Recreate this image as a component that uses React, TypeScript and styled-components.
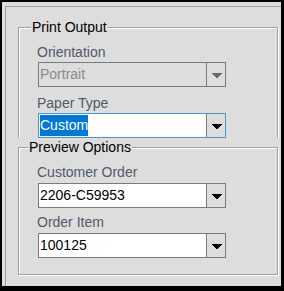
import React from "react";
import styled, { createGlobalStyle } from "styled-components";

const GlobalStyle = createGlobalStyle`
  html, body { margin: 0; padding: 0; background: #000; }
  body { font-family: "Liberation Sans", Arial, sans-serif; }
  * { box-sizing: border-box; }
`;

const BG = "#dddddd";

const Window = styled.div`
  width: 284px;
  height: 291px;
  border-style: solid;
  border-color: #000;
  border-width: 2px 3px 5px 2px;
  background: ${BG};
  display: flex;
  flex-direction: column;
  padding: 4px 0 0 3px;
`;

const Panel = styled.div`
  flex: 1;
  border-top: 1px solid #a0a0a0;
  border-left: 1px solid #a0a0a0;
  padding: 12px 3px 0 12px;
  display: flex;
  flex-direction: column;
`;

const Group = styled.fieldset<{ $open?: boolean; $top?: number }>`
  margin: ${(p) => p.$top ?? 0}px 0 0 0;
  min-width: 0;
  padding: 0;
  border: 1px solid #a0a0a0;
  border-bottom: ${(p) => (p.$open ? "none" : "1px solid #a0a0a0")};
  box-shadow: ${(p) =>
    p.$open
      ? "inset 1px 1px 0 #fff, 1px 0 0 #fff"
      : "inset 1px 1px 0 #fff, 1px 1px 0 #fff"};
`;

const Legend = styled.legend<{ $offset: number }>`
  margin-left: ${(p) => p.$offset}px;
  padding: 0 1px;
  font-size: 14px;
  line-height: 16px;
  color: #000;
  background: ${BG};
`;

const GroupBody = styled.div<{ $bottom: number }>`
  padding: 9px 0 ${(p) => p.$bottom}px 18px;
  display: flex;
  flex-direction: column;
`;

const Field = styled.div<{ $top: number; $gap: number }>`
  margin-top: ${(p) => p.$top}px;
  display: flex;
  flex-direction: column;
  gap: ${(p) => p.$gap}px;
`;

const Label = styled.div`
  font-size: 14px;
  line-height: 16px;
  color: #505a68;
`;

type ComboState = "disabled" | "focused" | "normal";

const borderFor = (s: ComboState) =>
  s === "focused" ? "#3d9ad9" : "#7a7a7a";

const Combo = styled.div<{ $state: ComboState }>`
  margin-left: 1px;
  width: 188px;
  height: 25px;
  border: 1px solid ${(p) => borderFor(p.$state)};
  background: ${(p) => (p.$state === "disabled" ? BG : "#fff")};
  display: flex;
`;

const ComboText = styled.div<{ $disabled?: boolean }>`
  flex: 1;
  padding: 1px;
  font-size: 14px;
  line-height: 21px;
  white-space: nowrap;
  overflow: hidden;
  color: ${(p) => (p.$disabled ? "#8a8a8a" : "#000")};
`;

const Selected = styled.span`
  display: inline-block;
  height: 21px;
  background: #0078d7;
  color: #fff;
`;

const DropButton = styled.div<{ $state: ComboState }>`
  width: 19px;
  border-left: 1px solid ${(p) => (p.$state === "focused" ? "#7a7a7a" : "#7a7a7a")};
  background: ${BG};
  display: flex;
  justify-content: center;
  padding-top: 10px;
  padding-left: 1px;
`;

const Arrow: React.FC<{ color: string }> = ({ color }) => (
  <svg width="10" height="5" viewBox="0 0 10 5" shapeRendering="crispEdges">
    <rect x="0" y="0" width="10" height="1" fill={color} />
    <rect x="1" y="1" width="8" height="1" fill={color} />
    <rect x="2" y="2" width="6" height="1" fill={color} />
    <rect x="3" y="3" width="4" height="1" fill={color} />
    <rect x="4" y="4" width="2" height="1" fill={color} />
  </svg>
);

const ComboBox: React.FC<{
  value: string;
  state: ComboState;
  selected?: boolean;
}> = ({ value, state, selected }) => (
  <Combo $state={state}>
    <ComboText $disabled={state === "disabled"}>
      {selected ? <Selected>{value}</Selected> : value}
    </ComboText>
    <DropButton $state={state}>
      <Arrow color={state === "disabled" ? "#6a6a6a" : "#000"} />
    </DropButton>
  </Combo>
);

export default function App() {
  return (
    <>
      <GlobalStyle />
      <Window>
        <Panel>
          <Group $open>
            <Legend $offset={12}>Print Output</Legend>
            <GroupBody $bottom={0}>
              <Field $top={0} $gap={2}>
                <Label>Orientation</Label>
                <ComboBox value="Portrait" state="disabled" />
              </Field>
              <Field $top={8} $gap={2}>
                <Label>Paper Type</Label>
                <ComboBox value="Custom" state="focused" selected />
              </Field>
            </GroupBody>
          </Group>
          <Group $top={1}>
            <Legend $offset={9}>Preview Options</Legend>
            <GroupBody $bottom={16}>
              <Field $top={0} $gap={3}>
                <Label>Customer Order</Label>
                <ComboBox value="2206-C59953" state="normal" />
              </Field>
              <Field $top={6} $gap={3}>
                <Label>Order Item</Label>
                <ComboBox value="100125" state="normal" />
              </Field>
            </GroupBody>
          </Group>
        </Panel>
      </Window>
    </>
  );
}
